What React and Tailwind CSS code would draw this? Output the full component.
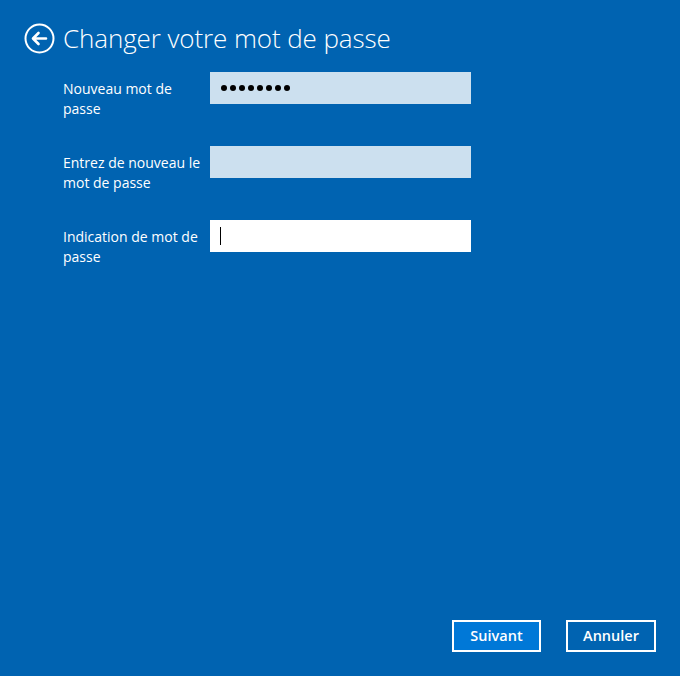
import React from "react";

function BackIcon() {
  return (
    <svg width="31" height="31" viewBox="0 0 31 31" fill="none">
      <circle cx="15.5" cy="15.5" r="14" stroke="white" strokeWidth="2" />
      <path d="M22 15.5H9.5M14.5 10L9 15.5L14.5 21" stroke="white" strokeWidth="2.6" strokeLinecap="round" strokeLinejoin="round" />
    </svg>
  );
}

function Field({ label, children, bg }) {
  return (
    <div className="flex items-start h-[32px]">
      <div className="w-[147px] pt-[7px] text-[14px] leading-[20px] text-white">{label}</div>
      <div className={`w-[261px] h-[32px] flex items-center ${bg}`}>{children}</div>
    </div>
  );
}

export default function App() {
  const dots = [0, 1, 2, 3, 4, 5, 6, 7];
  return (
    <div
      className="w-[680px] h-[676px] bg-[#0063b1] flex flex-col overflow-hidden"
      style={{ fontFamily: '"Segoe UI", "Open Sans", "Liberation Sans", sans-serif' }}
    >
      {/* Header */}
      <div className="flex items-center pt-[23px] pl-[24px] gap-[8px]">
        <BackIcon />
        <h1 className="text-[26px] font-light text-white leading-[31px] tracking-[-0.1px]">
          Changer votre mot de passe
        </h1>
      </div>

      {/* Form */}
      <div className="flex flex-col gap-[42px] pl-[63px] mt-[18px]">
        <Field label={<>Nouveau mot de<br />passe</>} bg="bg-[#cce0ef]">
          <div className="flex gap-[3px] pl-[11px]">
            {dots.map((d) => (
              <span key={d} className="w-[6px] h-[6px] rounded-full bg-black" />
            ))}
          </div>
        </Field>
        <Field label={<>Entrez de nouveau le<br />mot de passe</>} bg="bg-[#cce0ef]" />
        <Field label={<>Indication de mot de<br />passe</>} bg="bg-white">
          <span className="ml-[10px] w-px h-[18px] bg-black" />
        </Field>
      </div>

      {/* Buttons */}
      <div className="mt-auto flex justify-end gap-[25px] pr-[24px] pb-[24px]">
        <button className="w-[89px] h-[32px] border-2 border-white bg-[#0078d7] text-white text-[14.5px] font-semibold">
          Suivant
        </button>
        <button className="w-[90px] h-[32px] border-2 border-white bg-[#0063b1] text-white text-[14.5px] font-semibold">
          Annuler
        </button>
      </div>
    </div>
  );
}
